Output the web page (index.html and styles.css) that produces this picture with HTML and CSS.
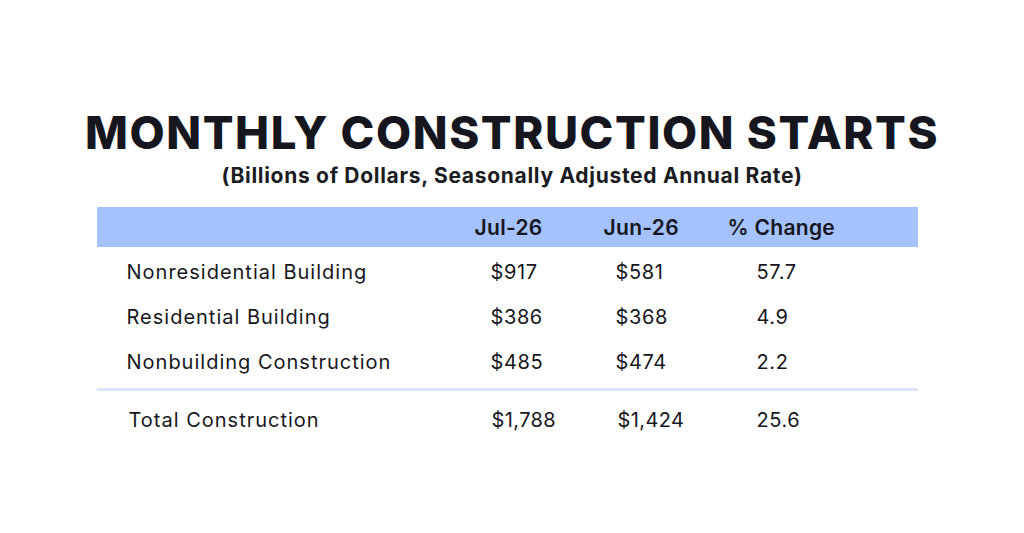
FILE: index.html
```html
<!DOCTYPE html>
<html lang="en">
<head>
<meta charset="utf-8">
<title>Monthly Construction Starts</title>
<link rel="stylesheet" href="styles.css">
</head>
<body>
<main class="page">
  <h1 class="title">MONTHLY CONSTRUCTION STARTS</h1>
  <p class="subtitle">(Billions of Dollars, Seasonally Adjusted Annual Rate)</p>
  <div class="table">
    <div class="row head">
      <div class="cell"></div>
      <div class="cell">Jul-26</div>
      <div class="cell">Jun-26</div>
      <div class="cell">% Change</div>
    </div>
    <div class="row data">
      <div class="cell label">Nonresidential Building</div>
      <div class="cell c2">$917</div>
      <div class="cell c3">$581</div>
      <div class="cell c4">57.7</div>
    </div>
    <div class="row data">
      <div class="cell label">Residential Building</div>
      <div class="cell c2">$386</div>
      <div class="cell c3">$368</div>
      <div class="cell c4">4.9</div>
    </div>
    <div class="row data">
      <div class="cell label">Nonbuilding Construction</div>
      <div class="cell c2">$485</div>
      <div class="cell c3">$474</div>
      <div class="cell c4">2.2</div>
    </div>
    <div class="divider"></div>
    <div class="row data total">
      <div class="cell label">Total Construction</div>
      <div class="cell c2">$1,788</div>
      <div class="cell c3">$1,424</div>
      <div class="cell c4">25.6</div>
    </div>
  </div>
</main>
</body>
</html>
```
FILE: styles.css
```css
html, body {
  margin: 0;
  padding: 0;
  background: #ffffff;
}
body {
  font-family: Inter, "Noto Sans", "Liberation Sans", sans-serif;
  color: #1b1b22;
}
.page {
  width: 1024px;
  height: 533px;
  display: flex;
  flex-direction: column;
  align-items: center;
  padding-top: 108px;
  box-sizing: border-box;
}
.title {
  margin: 0;
  font-size: 45.5px;
  line-height: 50px;
  font-weight: 800;
  color: #16161f;
  letter-spacing: 1.6px;
  white-space: nowrap;
}
.subtitle {
  margin: 5px 0 0;
  font-size: 21px;
  line-height: 26px;
  font-weight: 700;
  color: #1b1b22;
  letter-spacing: 0.7px;
  white-space: nowrap;
}
.table {
  margin-top: 18px;
  width: 821px;
  margin-right: 10px;
  display: flex;
  flex-direction: column;
}
.row {
  display: grid;
  grid-template-columns: 378px 129px 124px 1fr;
  align-items: center;
  box-sizing: border-box;
}
.head {
  height: 40px;
  background: #a4c2fd;
  font-size: 21px;
  font-weight: 600;
  color: #16161f;
  letter-spacing: 0.3px;
}
.data {
  height: 45px;
  padding-top: 5px;
  font-size: 20px;
  font-weight: 400;
  color: #17171c;
  letter-spacing: 0.6px;
}
.label {
  padding-left: 30px;
  letter-spacing: 1px;
}
.c2 { padding-left: 16px; }
.c3 { padding-left: 12px; }
.c4 { padding-left: 29px; }
.divider {
  height: 3px;
  margin-top: 6px;
  background: #dbe6fd;
}
.total {
  height: 58px;
  padding-top: 0;
}
.total .label { padding-left: 32px; }
.total .c2 { padding-left: 17px; letter-spacing: 0.4px; }
.total .c3 { padding-left: 14px; letter-spacing: 0.4px; }
```
